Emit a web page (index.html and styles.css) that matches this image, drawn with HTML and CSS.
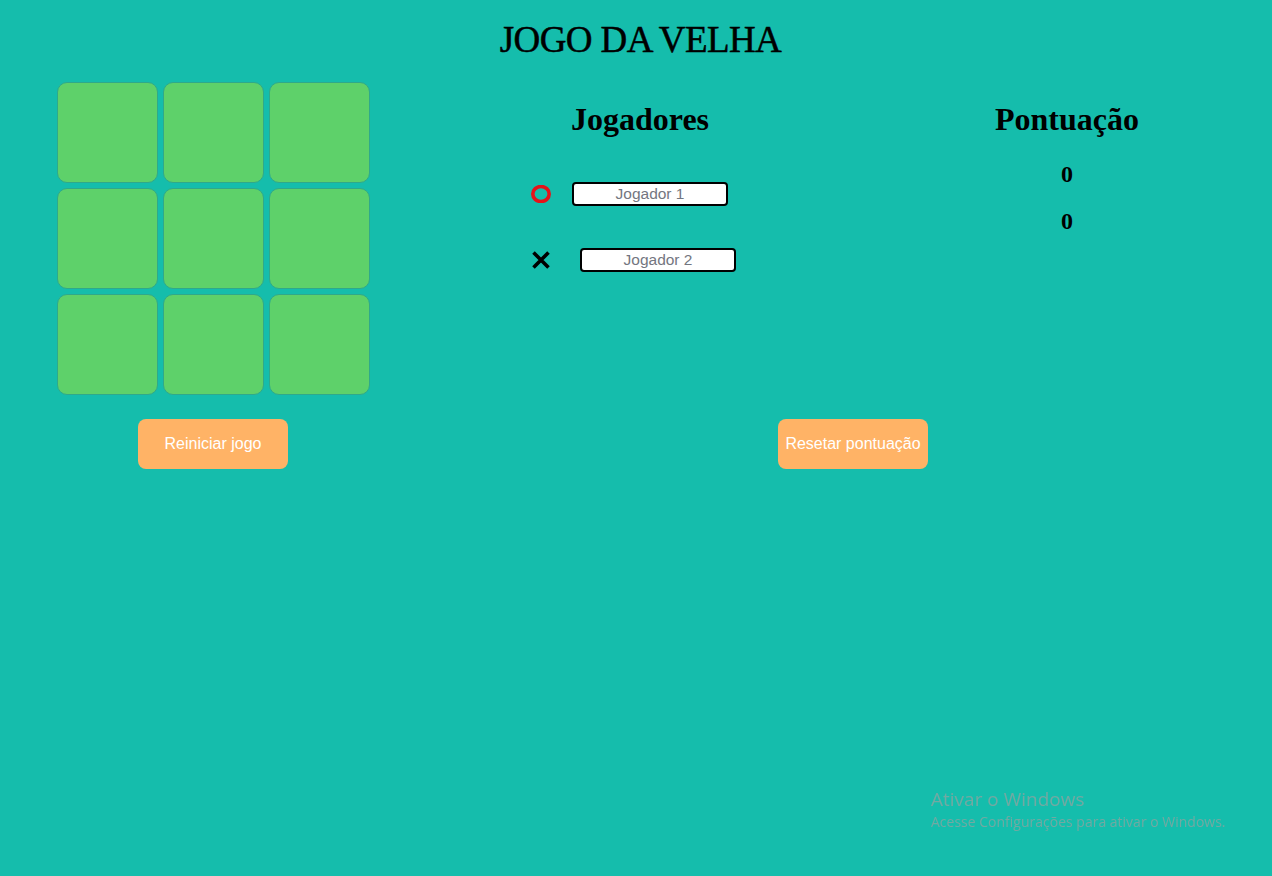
FILE: index.html
```html
<!DOCTYPE html>
<html lang="pt-BR">
<head>
<meta charset="utf-8">
<title>Jogo da Velha</title>
<link rel="stylesheet" href="styles.css">
</head>
<body>
<h1 class="title">JOGO DA VELHA</h1>
<div class="main">
  <div class="col-board">
    <div class="board">
      <div class="cell"></div><div class="cell"></div><div class="cell"></div>
      <div class="cell"></div><div class="cell"></div><div class="cell"></div>
      <div class="cell"></div><div class="cell"></div><div class="cell"></div>
    </div>
  </div>
  <div class="col-players">
    <h2 class="heading">Jogadores</h2>
    <div class="player player-o">
      <span class="icon icon-o"><svg width="20" height="18" viewBox="0 0 20 18"><ellipse cx="10" cy="9" rx="8.2" ry="7.5" fill="none" stroke="#e5131a" stroke-width="3.6"/></svg></span>
      <input class="name" type="text" placeholder="Jogador 1">
    </div>
    <div class="player player-x">
      <span class="icon icon-x"><svg width="20" height="18" viewBox="0 0 20 18"><path d="M2.5 1.5 L17.5 16.5 M17.5 1.5 L2.5 16.5" stroke="#000" stroke-width="3.6" fill="none"/></svg></span>
      <input class="name" type="text" placeholder="Jogador 2">
    </div>
  </div>
  <div class="col-score">
    <h2 class="heading">Pontuação</h2>
    <h3 class="score score-first">0</h3>
    <h3 class="score">0</h3>
  </div>
</div>
<div class="actions">
  <button class="btn btn-restart">Reiniciar jogo</button>
  <button class="btn btn-reset">Resetar pontuação</button>
</div>
<div class="watermark">
  <div class="wm-title">Ativar o Windows</div>
  <div class="wm-sub">Acesse Configurações para ativar o Windows.</div>
</div>
</body>
</html>
```

FILE: styles.css
```css
html, body {
  margin: 0;
  padding: 0;
}
body {
  background: #15bdac;
  font-family: "Liberation Serif", "Times New Roman", serif;
  color: #000;
  min-height: 876px;
}
.title {
  margin: 0;
  padding-top: 19px;
  padding-left: 9px;
  text-align: center;
  font-size: 37px;
  line-height: 42px;
  letter-spacing: -0.6px;
  font-weight: normal;
  -webkit-text-stroke: 0.5px #000;
}
.main {
  display: grid;
  grid-template-columns: 426px 428px 1fr;
  margin-top: 21px;
}
.col-board {
  padding-left: 57px;
}
.board {
  display: grid;
  grid-template-columns: repeat(3, 101px);
  grid-auto-rows: 101px;
  gap: 5px;
}
.cell {
  box-sizing: border-box;
  background: #5ed16a;
  border: 1px solid #2fa98a;
  border-radius: 10px;
}
.heading {
  margin: 19px 0 0;
  font-size: 32px;
  line-height: 37px;
  font-weight: bold;
  text-align: center;
}
.col-players {
  display: flex;
  flex-direction: column;
}
.player {
  display: flex;
  align-items: center;
  padding-left: 105px;
  height: 24px;
}
.player-o {
  margin-top: 44px;
}
.player-x {
  margin-top: 42px;
}
.icon {
  display: flex;
  width: 20px;
  height: 18px;
}
.icon-o {
  margin-right: 21px;
}
.icon-x {
  margin-right: 29px;
}
.name {
  box-sizing: border-box;
  width: 156px;
  height: 24px;
  border: 2px solid #000;
  border-radius: 4px;
  background: #fff;
  font-family: "Liberation Sans", Arial, sans-serif;
  font-size: 15.5px;
  text-align: center;
  padding: 0 4px;
  outline: none;
}
.name::placeholder {
  color: #737680;
}
.col-score {
  padding-left: 8px;
  display: flex;
  flex-direction: column;
  align-items: center;
}
.score {
  margin: 19px 0 0;
  font-size: 24px;
  line-height: 28px;
  font-weight: bold;
}
.score-first {
  margin-top: 22px;
}
.actions {
  display: flex;
  margin-top: 24px;
}
.btn {
  width: 150px;
  height: 50px;
  border: none;
  border-radius: 8px;
  background: #ffb366;
  color: #fff;
  font-family: "Liberation Sans", Arial, sans-serif;
  font-size: 16px;
  padding: 0;
  cursor: pointer;
}
.btn-restart {
  margin-left: 138px;
}
.btn-reset {
  margin-left: 490px;
}
.watermark {
  position: fixed;
  left: 931px;
  top: 786px;
  font-family: "Open Sans", "Noto Sans", sans-serif;
  color: #72a9a2;
}
.wm-title {
  font-size: 19px;
  line-height: 26px;
}
.wm-sub {
  font-size: 14px;
  line-height: 20px;
}
```
